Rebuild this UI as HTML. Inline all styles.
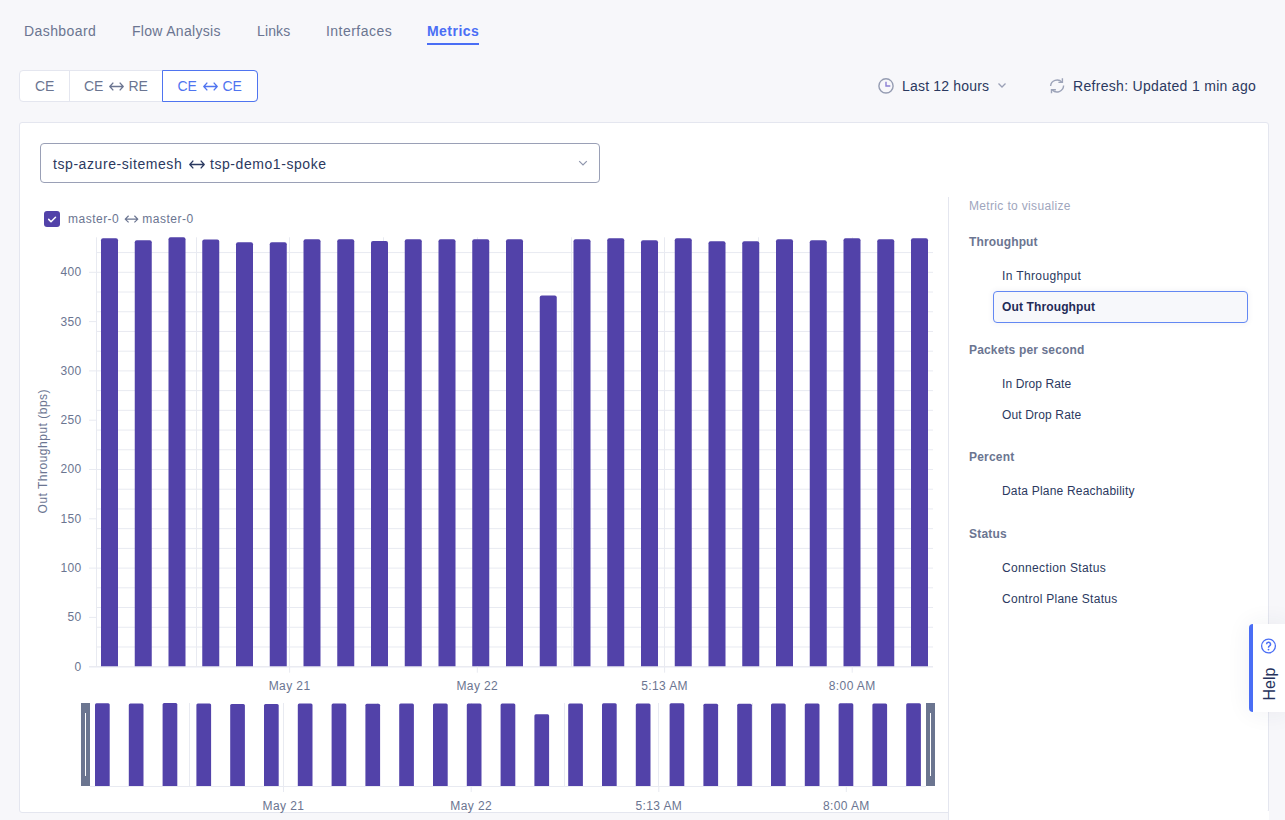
<!DOCTYPE html>
<html><head><meta charset="utf-8">
<style>
*{box-sizing:border-box;margin:0;padding:0}
html,body{width:1285px;height:820px;overflow:hidden}
body{background:#f7f7fa;font-family:"Liberation Sans",sans-serif;position:relative;color:#2b3960}
.a{position:absolute;white-space:nowrap}
.nav{font-size:14px;color:#6b7591;top:23px;line-height:16px}
.seg{font-size:14px;color:#6b7591}
.card{left:19px;top:122px;width:1250px;height:691px;background:#fff;border:1px solid #e4e6ef;border-radius:3px}
.rp{font-size:12px;line-height:14px}
.hd{font-weight:700;color:#6b7591}
.it{color:#2b3960}
</style></head><body>

<!-- nav tabs -->
<div class="a nav" style="left:24px;letter-spacing:0.41px">Dashboard</div>
<div class="a nav" style="left:132px;letter-spacing:0.3px">Flow Analysis</div>
<div class="a nav" style="left:257px;letter-spacing:0.13px">Links</div>
<div class="a nav" style="left:326px;letter-spacing:0.47px">Interfaces</div>
<div class="a nav" style="left:427px;letter-spacing:0.46px;font-weight:700;color:#4a6ef5">Metrics</div>
<div class="a" style="left:427px;top:43px;width:52px;height:2px;background:#4a6ef5"></div>

<!-- segmented -->
<div class="a" style="left:19px;top:70px;width:239px;height:32px;background:#fff;border:1px solid #e4e6ef;border-radius:4px"></div>
<div class="a" style="left:69px;top:71px;width:1px;height:30px;background:#e4e6ef"></div>
<div class="a" style="left:162px;top:70px;width:96px;height:32px;border:1px solid #4f74f0;border-radius:0 4px 4px 0"></div>
<div class="a seg" style="left:35px;top:78px;line-height:16px">CE</div>
<div class="a seg" style="left:84px;top:78px;line-height:16px">CE</div>
<svg class="a" style="left:109px;top:81.5px" width="15" height="9" viewBox="0 0 15 9"><path d="M4.30 0.6L0.8 4.5L4.30 8.40M10.70 0.6L14.20 4.5L10.70 8.40M1 4.5H14" fill="none" stroke="#6b7591" stroke-width="1.3" stroke-linejoin="round"/></svg>
<div class="a seg" style="left:128.5px;top:78px;line-height:16px">RE</div>
<div class="a seg" style="left:177.5px;top:78px;line-height:16px;color:#4f74f0">CE</div>
<svg class="a" style="left:202.5px;top:81.5px" width="15" height="9" viewBox="0 0 15 9"><path d="M4.30 0.6L0.8 4.5L4.30 8.40M10.70 0.6L14.20 4.5L10.70 8.40M1 4.5H14" fill="none" stroke="#4f74f0" stroke-width="1.3" stroke-linejoin="round"/></svg>
<div class="a seg" style="left:222.5px;top:78px;line-height:16px;color:#4f74f0">CE</div>

<!-- time / refresh -->
<svg class="a" style="left:877px;top:77px" width="18" height="18" viewBox="0 0 18 18"><circle cx="9" cy="8.9" r="7.1" fill="none" stroke="#959cb2" stroke-width="1.4"/><path d="M9 4.7V9H13.3" fill="none" stroke="#8c80d4" stroke-width="1.4"/></svg>
<div class="a" style="left:902px;top:78px;font-size:14px;line-height:16px;letter-spacing:0.19px;color:#2b3960">Last 12 hours</div>
<svg class="a" style="left:997px;top:82px" width="10" height="7" viewBox="0 0 10 7"><path d="M1.5 1.5L5 5L8.5 1.5" fill="none" stroke="#9aa0b6" stroke-width="1.3"/></svg>
<svg class="a" style="left:1049px;top:77px" width="17" height="17" viewBox="0 0 17 17"><path d="M1.6 9A6.5 6.5 0 0 1 12.9 5.2M14.6 8.6A6.5 6.5 0 0 1 3.2 12.7" fill="none" stroke="#9ca3b8" stroke-width="1.4"/><path d="M13.4 1.2V5.4H9.4M2.5 16.2V12.7H6.9" fill="none" stroke="#9ca3b8" stroke-width="1.4"/></svg>
<div class="a" style="left:1073px;top:78px;font-size:14px;line-height:16px;letter-spacing:0.31px;color:#2b3960">Refresh: Updated 1 min ago</div>

<!-- card -->
<div class="a card"></div>

<!-- dropdown -->
<div class="a" style="left:40px;top:143px;width:560px;height:40px;border:1px solid #9aa0b6;border-radius:4px;background:#fff"></div>
<div class="a" style="left:53px;top:156px;font-size:14px;line-height:16px;letter-spacing:0.57px;color:#2b3960">tsp-azure-sitemesh</div>
<svg class="a" style="left:189px;top:160px" width="16" height="9" viewBox="0 0 16 9"><path d="M4.30 0.6L0.8 4.5L4.30 8.40M11.70 0.6L15.20 4.5L11.70 8.40M1 4.5H15" fill="none" stroke="#2b3960" stroke-width="1.3" stroke-linejoin="round"/></svg>
<div class="a" style="left:210px;top:156px;font-size:14px;line-height:16px;letter-spacing:0.56px;color:#2b3960">tsp-demo1-spoke</div>
<svg class="a" style="left:578px;top:159.5px" width="10" height="7" viewBox="0 0 10 7"><path d="M1.2 1.2L5 5L8.8 1.2" fill="none" stroke="#8f96ad" stroke-width="1.2"/></svg>

<!-- CHART -->
<svg class="a" style="left:0;top:0" width="1285" height="820" viewBox="0 0 1285 820">
<line x1="96" x2="933" y1="666.70" y2="666.70" stroke="#e8eaf1" stroke-width="1"/>
<line x1="96" x2="933" y1="646.98" y2="646.98" stroke="#e8eaf1" stroke-width="1"/>
<line x1="96" x2="933" y1="627.26" y2="627.26" stroke="#e8eaf1" stroke-width="1"/>
<line x1="96" x2="933" y1="607.54" y2="607.54" stroke="#e8eaf1" stroke-width="1"/>
<line x1="96" x2="933" y1="587.82" y2="587.82" stroke="#e8eaf1" stroke-width="1"/>
<line x1="96" x2="933" y1="568.10" y2="568.10" stroke="#e8eaf1" stroke-width="1"/>
<line x1="96" x2="933" y1="548.38" y2="548.38" stroke="#e8eaf1" stroke-width="1"/>
<line x1="96" x2="933" y1="528.66" y2="528.66" stroke="#e8eaf1" stroke-width="1"/>
<line x1="96" x2="933" y1="508.94" y2="508.94" stroke="#e8eaf1" stroke-width="1"/>
<line x1="96" x2="933" y1="489.22" y2="489.22" stroke="#e8eaf1" stroke-width="1"/>
<line x1="96" x2="933" y1="469.50" y2="469.50" stroke="#e8eaf1" stroke-width="1"/>
<line x1="96" x2="933" y1="449.78" y2="449.78" stroke="#e8eaf1" stroke-width="1"/>
<line x1="96" x2="933" y1="430.06" y2="430.06" stroke="#e8eaf1" stroke-width="1"/>
<line x1="96" x2="933" y1="410.34" y2="410.34" stroke="#e8eaf1" stroke-width="1"/>
<line x1="96" x2="933" y1="390.62" y2="390.62" stroke="#e8eaf1" stroke-width="1"/>
<line x1="96" x2="933" y1="370.90" y2="370.90" stroke="#e8eaf1" stroke-width="1"/>
<line x1="96" x2="933" y1="351.18" y2="351.18" stroke="#e8eaf1" stroke-width="1"/>
<line x1="96" x2="933" y1="331.46" y2="331.46" stroke="#e8eaf1" stroke-width="1"/>
<line x1="96" x2="933" y1="311.74" y2="311.74" stroke="#e8eaf1" stroke-width="1"/>
<line x1="96" x2="933" y1="292.02" y2="292.02" stroke="#e8eaf1" stroke-width="1"/>
<line x1="96" x2="933" y1="272.30" y2="272.30" stroke="#e8eaf1" stroke-width="1"/>
<line x1="96" x2="933" y1="252.58" y2="252.58" stroke="#e8eaf1" stroke-width="1"/>
<line x1="96.5" x2="96.5" y1="237.3" y2="666.7" stroke="#e8eaf1" stroke-width="1"/>
<line x1="196.5" x2="196.5" y1="237.3" y2="666.7" stroke="#e8eaf1" stroke-width="1"/>
<line x1="289.5" x2="289.5" y1="237.3" y2="666.7" stroke="#e8eaf1" stroke-width="1"/>
<line x1="383.5" x2="383.5" y1="237.3" y2="666.7" stroke="#e8eaf1" stroke-width="1"/>
<line x1="477.5" x2="477.5" y1="237.3" y2="666.7" stroke="#e8eaf1" stroke-width="1"/>
<line x1="571.5" x2="571.5" y1="237.3" y2="666.7" stroke="#e8eaf1" stroke-width="1"/>
<line x1="664.5" x2="664.5" y1="237.3" y2="666.7" stroke="#e8eaf1" stroke-width="1"/>
<line x1="758.5" x2="758.5" y1="237.3" y2="666.7" stroke="#e8eaf1" stroke-width="1"/>
<line x1="852.5" x2="852.5" y1="237.3" y2="666.7" stroke="#e8eaf1" stroke-width="1"/>
<line x1="89" x2="96" y1="666.70" y2="666.70" stroke="#e8eaf1" stroke-width="1"/>
<text x="81.5" y="670.60" text-anchor="end" font-size="12" fill="#6b7591" letter-spacing="0.3">0</text>
<line x1="89" x2="96" y1="617.40" y2="617.40" stroke="#e8eaf1" stroke-width="1"/>
<text x="81.5" y="621.30" text-anchor="end" font-size="12" fill="#6b7591" letter-spacing="0.3">50</text>
<line x1="89" x2="96" y1="568.10" y2="568.10" stroke="#e8eaf1" stroke-width="1"/>
<text x="81.5" y="572.00" text-anchor="end" font-size="12" fill="#6b7591" letter-spacing="0.3">100</text>
<line x1="89" x2="96" y1="518.80" y2="518.80" stroke="#e8eaf1" stroke-width="1"/>
<text x="81.5" y="522.70" text-anchor="end" font-size="12" fill="#6b7591" letter-spacing="0.3">150</text>
<line x1="89" x2="96" y1="469.50" y2="469.50" stroke="#e8eaf1" stroke-width="1"/>
<text x="81.5" y="473.40" text-anchor="end" font-size="12" fill="#6b7591" letter-spacing="0.3">200</text>
<line x1="89" x2="96" y1="420.20" y2="420.20" stroke="#e8eaf1" stroke-width="1"/>
<text x="81.5" y="424.10" text-anchor="end" font-size="12" fill="#6b7591" letter-spacing="0.3">250</text>
<line x1="89" x2="96" y1="370.90" y2="370.90" stroke="#e8eaf1" stroke-width="1"/>
<text x="81.5" y="374.80" text-anchor="end" font-size="12" fill="#6b7591" letter-spacing="0.3">300</text>
<line x1="89" x2="96" y1="321.60" y2="321.60" stroke="#e8eaf1" stroke-width="1"/>
<text x="81.5" y="325.50" text-anchor="end" font-size="12" fill="#6b7591" letter-spacing="0.3">350</text>
<line x1="89" x2="96" y1="272.30" y2="272.30" stroke="#e8eaf1" stroke-width="1"/>
<text x="81.5" y="276.20" text-anchor="end" font-size="12" fill="#6b7591" letter-spacing="0.3">400</text>
<line x1="89" x2="933" y1="666.9" y2="666.9" stroke="#e8eaf1" stroke-width="1"/>
<path d="M101.00 666.2 V240.20 Q101.00 238.20 103.00 238.20 H116.00 Q118.00 238.20 118.00 240.20 V666.2 Z" fill="#5242a9"/>
<path d="M134.75 666.2 V242.30 Q134.75 240.30 136.75 240.30 H149.75 Q151.75 240.30 151.75 242.30 V666.2 Z" fill="#5242a9"/>
<path d="M168.50 666.2 V239.20 Q168.50 237.20 170.50 237.20 H183.50 Q185.50 237.20 185.50 239.20 V666.2 Z" fill="#5242a9"/>
<path d="M202.25 666.2 V241.40 Q202.25 239.40 204.25 239.40 H217.25 Q219.25 239.40 219.25 241.40 V666.2 Z" fill="#5242a9"/>
<path d="M236.00 666.2 V244.20 Q236.00 242.20 238.00 242.20 H251.00 Q253.00 242.20 253.00 244.20 V666.2 Z" fill="#5242a9"/>
<path d="M269.75 666.2 V244.20 Q269.75 242.20 271.75 242.20 H284.75 Q286.75 242.20 286.75 244.20 V666.2 Z" fill="#5242a9"/>
<path d="M303.50 666.2 V241.30 Q303.50 239.30 305.50 239.30 H318.50 Q320.50 239.30 320.50 241.30 V666.2 Z" fill="#5242a9"/>
<path d="M337.25 666.2 V241.30 Q337.25 239.30 339.25 239.30 H352.25 Q354.25 239.30 354.25 241.30 V666.2 Z" fill="#5242a9"/>
<path d="M371.00 666.2 V243.10 Q371.00 241.10 373.00 241.10 H386.00 Q388.00 241.10 388.00 243.10 V666.2 Z" fill="#5242a9"/>
<path d="M404.75 666.2 V241.30 Q404.75 239.30 406.75 239.30 H419.75 Q421.75 239.30 421.75 241.30 V666.2 Z" fill="#5242a9"/>
<path d="M438.50 666.2 V241.30 Q438.50 239.30 440.50 239.30 H453.50 Q455.50 239.30 455.50 241.30 V666.2 Z" fill="#5242a9"/>
<path d="M472.25 666.2 V241.30 Q472.25 239.30 474.25 239.30 H487.25 Q489.25 239.30 489.25 241.30 V666.2 Z" fill="#5242a9"/>
<path d="M506.00 666.2 V241.30 Q506.00 239.30 508.00 239.30 H521.00 Q523.00 239.30 523.00 241.30 V666.2 Z" fill="#5242a9"/>
<path d="M539.75 666.2 V297.40 Q539.75 295.40 541.75 295.40 H554.75 Q556.75 295.40 556.75 297.40 V666.2 Z" fill="#5242a9"/>
<path d="M573.50 666.2 V241.30 Q573.50 239.30 575.50 239.30 H588.50 Q590.50 239.30 590.50 241.30 V666.2 Z" fill="#5242a9"/>
<path d="M607.25 666.2 V240.20 Q607.25 238.20 609.25 238.20 H622.25 Q624.25 238.20 624.25 240.20 V666.2 Z" fill="#5242a9"/>
<path d="M641.00 666.2 V242.30 Q641.00 240.30 643.00 240.30 H656.00 Q658.00 240.30 658.00 242.30 V666.2 Z" fill="#5242a9"/>
<path d="M674.75 666.2 V240.20 Q674.75 238.20 676.75 238.20 H689.75 Q691.75 238.20 691.75 240.20 V666.2 Z" fill="#5242a9"/>
<path d="M708.50 666.2 V243.20 Q708.50 241.20 710.50 241.20 H723.50 Q725.50 241.20 725.50 243.20 V666.2 Z" fill="#5242a9"/>
<path d="M742.25 666.2 V243.20 Q742.25 241.20 744.25 241.20 H757.25 Q759.25 241.20 759.25 243.20 V666.2 Z" fill="#5242a9"/>
<path d="M776.00 666.2 V241.30 Q776.00 239.30 778.00 239.30 H791.00 Q793.00 239.30 793.00 241.30 V666.2 Z" fill="#5242a9"/>
<path d="M809.75 666.2 V242.20 Q809.75 240.20 811.75 240.20 H824.75 Q826.75 240.20 826.75 242.20 V666.2 Z" fill="#5242a9"/>
<path d="M843.50 666.2 V240.20 Q843.50 238.20 845.50 238.20 H858.50 Q860.50 238.20 860.50 240.20 V666.2 Z" fill="#5242a9"/>
<path d="M877.25 666.2 V241.30 Q877.25 239.30 879.25 239.30 H892.25 Q894.25 239.30 894.25 241.30 V666.2 Z" fill="#5242a9"/>
<path d="M911.00 666.2 V240.20 Q911.00 238.20 913.00 238.20 H926.00 Q928.00 238.20 928.00 240.20 V666.2 Z" fill="#5242a9"/>
<line x1="289.6" x2="289.6" y1="666.7" y2="672.7" stroke="#e8eaf1" stroke-width="1"/>
<text x="289.6" y="690.3" text-anchor="middle" font-size="12" fill="#6b7591" letter-spacing="0.4">May 21</text>
<line x1="477.3" x2="477.3" y1="666.7" y2="672.7" stroke="#e8eaf1" stroke-width="1"/>
<text x="477.3" y="690.3" text-anchor="middle" font-size="12" fill="#6b7591" letter-spacing="0.4">May 22</text>
<line x1="664.6" x2="664.6" y1="666.7" y2="672.7" stroke="#e8eaf1" stroke-width="1"/>
<text x="664.6" y="690.3" text-anchor="middle" font-size="12" fill="#6b7591" letter-spacing="0.4">5:13 AM</text>
<line x1="852.2" x2="852.2" y1="666.7" y2="672.7" stroke="#e8eaf1" stroke-width="1"/>
<text x="852.2" y="690.3" text-anchor="middle" font-size="12" fill="#6b7591" letter-spacing="0.4">8:00 AM</text>
<text transform="translate(47.2 451.2) rotate(-90)" text-anchor="middle" font-size="12" fill="#6b7591" letter-spacing="0.5">Out Throughput (bps)</text>
<line x1="189.5" x2="189.5" y1="703" y2="786" stroke="#e8eaf1" stroke-width="1"/>
<line x1="283.5" x2="283.5" y1="703" y2="786" stroke="#e8eaf1" stroke-width="1"/>
<line x1="377.5" x2="377.5" y1="703" y2="786" stroke="#e8eaf1" stroke-width="1"/>
<line x1="471.5" x2="471.5" y1="703" y2="786" stroke="#e8eaf1" stroke-width="1"/>
<line x1="564.5" x2="564.5" y1="703" y2="786" stroke="#e8eaf1" stroke-width="1"/>
<line x1="658.5" x2="658.5" y1="703" y2="786" stroke="#e8eaf1" stroke-width="1"/>
<line x1="752.5" x2="752.5" y1="703" y2="786" stroke="#e8eaf1" stroke-width="1"/>
<line x1="846.5" x2="846.5" y1="703" y2="786" stroke="#e8eaf1" stroke-width="1"/>
<line x1="90" x2="926" y1="786.5" y2="786.5" stroke="#e8eaf1" stroke-width="1"/>
<path d="M95.00 786 V704.69 Q95.00 703.19 96.50 703.19 H108.20 Q109.70 703.19 109.70 704.69 V786 Z" fill="#5242a9"/>
<path d="M128.80 786 V705.10 Q128.80 703.60 130.30 703.60 H142.00 Q143.50 703.60 143.50 705.10 V786 Z" fill="#5242a9"/>
<path d="M162.60 786 V704.50 Q162.60 703.00 164.10 703.00 H175.80 Q177.30 703.00 177.30 704.50 V786 Z" fill="#5242a9"/>
<path d="M196.40 786 V704.93 Q196.40 703.43 197.90 703.43 H209.60 Q211.10 703.43 211.10 704.93 V786 Z" fill="#5242a9"/>
<path d="M230.20 786 V705.47 Q230.20 703.97 231.70 703.97 H243.40 Q244.90 703.97 244.90 705.47 V786 Z" fill="#5242a9"/>
<path d="M264.00 786 V705.47 Q264.00 703.97 265.50 703.97 H277.20 Q278.70 703.97 278.70 705.47 V786 Z" fill="#5242a9"/>
<path d="M297.80 786 V704.91 Q297.80 703.41 299.30 703.41 H311.00 Q312.50 703.41 312.50 704.91 V786 Z" fill="#5242a9"/>
<path d="M331.60 786 V704.91 Q331.60 703.41 333.10 703.41 H344.80 Q346.30 703.41 346.30 704.91 V786 Z" fill="#5242a9"/>
<path d="M365.40 786 V705.25 Q365.40 703.75 366.90 703.75 H378.60 Q380.10 703.75 380.10 705.25 V786 Z" fill="#5242a9"/>
<path d="M399.20 786 V704.91 Q399.20 703.41 400.70 703.41 H412.40 Q413.90 703.41 413.90 704.91 V786 Z" fill="#5242a9"/>
<path d="M433.00 786 V704.91 Q433.00 703.41 434.50 703.41 H446.20 Q447.70 703.41 447.70 704.91 V786 Z" fill="#5242a9"/>
<path d="M466.80 786 V704.91 Q466.80 703.41 468.30 703.41 H480.00 Q481.50 703.41 481.50 704.91 V786 Z" fill="#5242a9"/>
<path d="M500.60 786 V704.91 Q500.60 703.41 502.10 703.41 H513.80 Q515.30 703.41 515.30 704.91 V786 Z" fill="#5242a9"/>
<path d="M534.40 786 V715.75 Q534.40 714.25 535.90 714.25 H547.60 Q549.10 714.25 549.10 715.75 V786 Z" fill="#5242a9"/>
<path d="M568.20 786 V704.91 Q568.20 703.41 569.70 703.41 H581.40 Q582.90 703.41 582.90 704.91 V786 Z" fill="#5242a9"/>
<path d="M602.00 786 V704.69 Q602.00 703.19 603.50 703.19 H615.20 Q616.70 703.19 616.70 704.69 V786 Z" fill="#5242a9"/>
<path d="M635.80 786 V705.10 Q635.80 703.60 637.30 703.60 H649.00 Q650.50 703.60 650.50 705.10 V786 Z" fill="#5242a9"/>
<path d="M669.60 786 V704.69 Q669.60 703.19 671.10 703.19 H682.80 Q684.30 703.19 684.30 704.69 V786 Z" fill="#5242a9"/>
<path d="M703.40 786 V705.27 Q703.40 703.77 704.90 703.77 H716.60 Q718.10 703.77 718.10 705.27 V786 Z" fill="#5242a9"/>
<path d="M737.20 786 V705.27 Q737.20 703.77 738.70 703.77 H750.40 Q751.90 703.77 751.90 705.27 V786 Z" fill="#5242a9"/>
<path d="M771.00 786 V704.91 Q771.00 703.41 772.50 703.41 H784.20 Q785.70 703.41 785.70 704.91 V786 Z" fill="#5242a9"/>
<path d="M804.80 786 V705.08 Q804.80 703.58 806.30 703.58 H818.00 Q819.50 703.58 819.50 705.08 V786 Z" fill="#5242a9"/>
<path d="M838.60 786 V704.69 Q838.60 703.19 840.10 703.19 H851.80 Q853.30 703.19 853.30 704.69 V786 Z" fill="#5242a9"/>
<path d="M872.40 786 V704.91 Q872.40 703.41 873.90 703.41 H885.60 Q887.10 703.41 887.10 704.91 V786 Z" fill="#5242a9"/>
<path d="M906.20 786 V704.69 Q906.20 703.19 907.70 703.19 H919.40 Q920.90 703.19 920.90 704.69 V786 Z" fill="#5242a9"/>
<line x1="283.5" x2="283.5" y1="786" y2="792" stroke="#e8eaf1" stroke-width="1"/>
<text x="283.5" y="810" text-anchor="middle" font-size="12" fill="#6b7591" letter-spacing="0.4">May 21</text>
<line x1="471.2" x2="471.2" y1="786" y2="792" stroke="#e8eaf1" stroke-width="1"/>
<text x="471.2" y="810" text-anchor="middle" font-size="12" fill="#6b7591" letter-spacing="0.4">May 22</text>
<line x1="658.8" x2="658.8" y1="786" y2="792" stroke="#e8eaf1" stroke-width="1"/>
<text x="658.8" y="810" text-anchor="middle" font-size="12" fill="#6b7591" letter-spacing="0.4">5:13 AM</text>
<line x1="846.3" x2="846.3" y1="786" y2="792" stroke="#e8eaf1" stroke-width="1"/>
<text x="846.3" y="810" text-anchor="middle" font-size="12" fill="#6b7591" letter-spacing="0.4">8:00 AM</text>
<rect x="81" y="703" width="9" height="83" fill="#6b7590"/>
<rect x="85" y="713" width="1" height="63" fill="#fff"/>
<rect x="926" y="703" width="9" height="83" fill="#6b7590"/>
<rect x="930" y="713" width="1" height="63" fill="#fff"/>
<rect x="44" y="211" width="16" height="16" rx="3" fill="#5242a9"/>
<path d="M48.7 219.4L51 221.7L55.5 217.3" fill="none" stroke="#fff" stroke-width="1.5" stroke-linecap="round" stroke-linejoin="round"/>
<text x="68" y="223" font-size="12" fill="#6b7591" letter-spacing="0.49">master-0</text>
<text x="142.3" y="223" font-size="12" fill="#6b7591" letter-spacing="0.49">master-0</text>
<path d="M128.6 215.8L125.2 219.1L128.6 222.4M134.4 215.8L137.8 219.1L134.4 222.4M125.5 219.1H137.5" fill="none" stroke="#6b7591" stroke-width="1.2" stroke-linejoin="round"/>
</svg>

<!-- right panel -->
<div class="a" style="left:948px;top:197px;width:1px;height:623px;background:#e4e6ef"></div>
<div class="a" style="left:949px;top:811px;width:320px;height:9px;background:#fff"></div>
<div class="a rp" style="left:969px;top:199px;color:#a0a6bd;letter-spacing:0.34px">Metric to visualize</div>
<div class="a rp hd" style="left:969px;top:235px;letter-spacing:0.14px">Throughput</div>
<div class="a rp it" style="left:1002px;top:269px;letter-spacing:0.37px">In Throughput</div>
<div class="a" style="left:993px;top:291px;width:255px;height:32px;border:1px solid #6388f3;border-radius:4px;background:#f7f8fb;box-shadow:0 0 6px rgba(60,70,120,0.08)"></div>
<div class="a rp" style="left:1002px;top:300px;font-weight:700;color:#1f2b57;letter-spacing:0.13px">Out Throughput</div>
<div class="a rp hd" style="left:969px;top:343px;letter-spacing:0.15px">Packets per second</div>
<div class="a rp it" style="left:1002px;top:377px;letter-spacing:0.1px">In Drop Rate</div>
<div class="a rp it" style="left:1002px;top:408px;letter-spacing:0.15px">Out Drop Rate</div>
<div class="a rp hd" style="left:969px;top:450px;letter-spacing:0.21px">Percent</div>
<div class="a rp it" style="left:1002px;top:484px;letter-spacing:0.2px">Data Plane Reachability</div>
<div class="a rp hd" style="left:969px;top:527px;letter-spacing:0.2px">Status</div>
<div class="a rp it" style="left:1002px;top:561px;letter-spacing:0.35px">Connection Status</div>
<div class="a rp it" style="left:1002px;top:592px;letter-spacing:0.27px">Control Plane Status</div>

<!-- help tab -->
<div class="a" style="left:1249px;top:624px;width:40px;height:88px;background:#fff;border-left:4px solid #4a6ef5;border-radius:4px 0 0 4px;box-shadow:0 0 24px rgba(40,50,90,0.07)"></div>
<svg class="a" style="left:1260px;top:638px" width="17" height="17" viewBox="0 0 17 17"><circle cx="8.5" cy="8" r="6.9" fill="none" stroke="#4a6ef5" stroke-width="1.3"/><path d="M6.6 6.3A1.95 1.95 0 1 1 9.3 8.1C8.7 8.4 8.5 8.8 8.5 9.7" fill="none" stroke="#4a6ef5" stroke-width="1.5"/><circle cx="8.5" cy="11.6" r="0.9" fill="#4a6ef5"/></svg>
<div class="a" style="left:1252px;top:675.3px;width:36px;height:18px;font-size:16px;line-height:18px;color:#26325c;transform:rotate(-90deg);transform-origin:center;text-align:center">Help</div>

</body></html>
